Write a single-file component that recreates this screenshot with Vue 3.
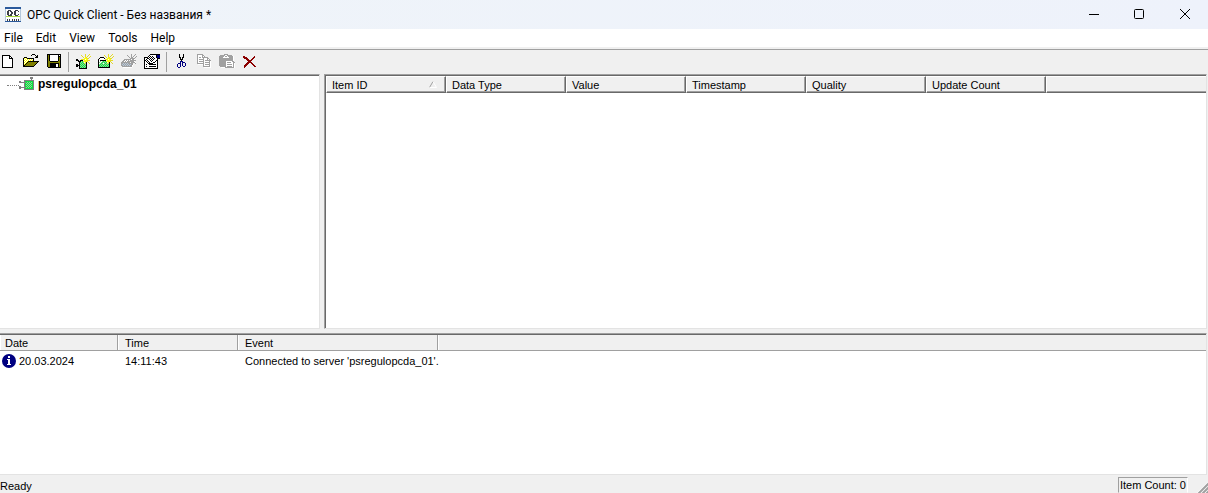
<script setup>
const palette = {
  k: '#000000',
  w: '#ffffff',
  y: '#ffff00',
  l: '#e4da28',
  o: '#808000',
  g: '#808080',
  s: '#b4c8dc',
  n: '#10e040',
  m: '#8bd898',
  b: '#000080',
  c: '#2b5a9c',
  d: '#3c4048',
  e: '#a8d840',
  r: '#8b0000',
  a: '#a0a0a0'
}

// Each icon is a small bitmap: one string per row, one palette letter per pixel.
const bitmaps = {
  new: [
    '................',
    '..kkkkkkkk......',
    '..kwwwwwwkk.....',
    '..kwwwwwwkwk....',
    '..kwwwwwwkkkk...',
    '..kwwwwwwwwwk...',
    '..kwwwwwwwwwk...',
    '..kwwwwwwwwwk...',
    '..kwwwwwwwwwk...',
    '..kwwwwwwwwwk...',
    '..kwwwwwwwwwk...',
    '..kwwwwwwwwwk...',
    '..kwwwwwwwwwk...',
    '..kkkkkkkkkkk...'
  ],
  open: [
    '.........kkk....',
    '........k...k.k.',
    '.............kk.',
    '.kkk........kkk.',
    'kywykkkkkkk.....',
    'kwywywywywk.....',
    'kywywywywyk.....',
    'kwywykkkkkkkkkkk',
    'kywykoooooooook.',
    'kwykoooooooook..',
    'kykoooooooook...',
    'kkoooooooook....',
    'kkkkkkkkkkk.....'
  ],
  save: [
    '.kkkkkkkkkkkkkk.',
    '.kokwwwwwwwwkwk.',
    '.kokwwwwwwwwkkk.',
    '.kokwwwwwwwwkok.',
    '.kokwwwwwwwwkok.',
    '.kokwwwwwwwwkok.',
    '.kokwwwwwwwwkok.',
    '.kookkkkkkkkook.',
    '.kooooooooooook.',
    '.kookkkkkkkkkok.',
    '.kookkkkkkwwkok.',
    '.kookkkkkkwwkok.',
    '.kookkkkkkwwkok.',
    '..kkkkkkkkkkkkk.'
  ],
  server: [
    '..........l...l.',
    '......l...l..l..',
    '.......l..l.l..l',
    '........l.yl..l.',
    '.........yyyll..',
    '.kk...lllywyy...',
    '.kkk.kkk.yyylll.',
    '...kkkmnlylyl...',
    '....knmnm.yk.l..',
    '....kmnmnlmk..l.',
    '.kk.knmnmnmk....',
    '.kkkkmnmnmnk....',
    '.kk.knmnmnmk....',
    '....kmnmnmnk....',
    '....kkkkkkkk....'
  ],
  group: [
    '..........l...l.',
    '......l...l..l..',
    '.......l..l.l..l',
    '..kkkk..l.yl..l.',
    '.kwwwwk..yyyll..',
    'kwwwwwwllywyy...',
    'kwkkkkkk.yyylll.',
    'kwmwmnmnlylyl...',
    'kmwmnmnmn.yk.l..',
    'kwmnmwmnmlmk..l.',
    'kmnmnmnmnmnk....',
    'knmnmnmnmnmk....',
    'kmnmnmnmnmnk....',
    'kkkkkkkkkkkk....'
  ],
  item: [
    '..........a...a.',
    '......a...a..a..',
    '.......a..a.a..a',
    '........a.aa..a.',
    '.........aaaaa..',
    '...aaaaaaawaaw..',
    '..aawawa.aaaaaa.',
    '.aawawaaaaaaaw..',
    'aaaaaaaaa.aaaaw.',
    'aasasasaaaaa..a.',
    'asasasasasaaw...',
    'aasasasasaaw....',
    '.aaaaaaaaaaw....',
    '..wwwwwwwww.....'
  ],
  properties: [
    '......kkkkkkkkkk',
    '.....kwwwwwwkbbb',
    '....kwkwkwwwkbbb',
    'kkkkwkwkwkwwkbbb',
    'kwwkkwkwkwkwwkkk',
    'kwkwwkwkwkwwwk..',
    'kkwkwwkwkwwwkk..',
    'kwkwkwwkwwwkwk..',
    'kwwkwkwwwkkwwk..',
    'kwwwkkkkkwwwwk..',
    'kwkwwkkkkkkkwk..',
    'kwwwwwwwwwwwwk..',
    'kwkwwkkkkkkkwk..',
    'kwwwwwwwwwwwwk..',
    'kkkkkkkkkkkkkk..'
  ],
  cut: [
    '......k...k.....',
    '......k...k.....',
    '......k...k.....',
    '......kk.kk.....',
    '.......k.k......',
    '.......kkk......',
    '........k.......',
    '.......bbb......',
    '.......b.bbb....',
    '.....bbb.b..b...',
    '....b..b.b..b...',
    '....b..b.b..b...',
    '....b..b..bb....',
    '.....bb.........'
  ],
  copy: [
    '.aaaaaa.........',
    '.awwwwaa........',
    '.awwwwawa.......',
    '.awaawaaaaaa....',
    '.awwwwwawwwaa...',
    '.awaaaaawwwawa..',
    '.awwwwwawaaaaaa.',
    '.awaaaaawwwwwaw.',
    '.awwwwwawaaaaaw.',
    '.aaaaaaawwwwwaw.',
    '..wwwwwawaaaaaw.',
    '.......awwwwwaw.',
    '.......aaaaaaaw.',
    '........wwwwwww.'
  ],
  paste: [
    '.....aaaa.......',
    '.aaaaawwaaaaa...',
    'aaaaawaawaaaaaw.',
    'aaaawwwwwwaaaaw.',
    'aaaaaaaaaaaaaaw.',
    'aaaaaaaaaaaaaaw.',
    'aaaaaaaaaaaaaaw.',
    'aaaaaaawwwwwwaa.',
    'aaaaaaawaaaawwaa',
    'aaaaaaawwwwwwwaw',
    'aaaaaaawaaaaawaw',
    'aaaaaaawwwwwwwaw',
    '.aaaaaawaaaaawaw',
    '..wwwwaaaaaaaaaw'
  ],
  remove: [
    '................',
    '................',
    '.rr.........r...',
    '.rrrr......rr...',
    '..rrrr....rr....',
    '....rrr..rr.....',
    '.....rrrrr......',
    '......rrr.......',
    '.....rrrrr......',
    '....rrr..rr.....',
    '...rrr....rr....',
    '..rrr......rr...',
    '..rr........rr..',
    '..r.............'
  ],
  node: [
    '...........ggg..',
    '...........ggg..',
    '............g...',
    '.....gggggggggg.',
    'gg...gnnnnnnnng.',
    'gggggggnmnmnmng.',
    '.....gnmnmnmnng.',
    '.....gnnmnmnmng.',
    '.....gnmnmnmnng.',
    'gg...gnnmnmnmng.',
    'gggggggmnmnmnng.',
    'gg...gnnnnnnnng.',
    '.....gggggggggg.'
  ],
  app: [
    'cccccccccccccccc',
    'cccccccccccccccc',
    'swwwwwwwwwwwwwws',
    'swwdddwwwwdddwws',
    'swddwddwwddwwdws',
    'swddwwddwddwwwws',
    'swddwwddwddwwwws',
    'swddwddwwddwwdws',
    'swwddddwwwdddwws',
    'seeeeeeeeeeeeees',
    'swwwwwwwwwwwwwws',
    'swwwwwwwwwwwwwws',
    'swdwdwwdwdwdwdws',
    'swdwdwwdwdwdwdws',
    'cccccccccccccccc'
  ]
}

const layers = {}
for (const [name, rows] of Object.entries(bitmaps)) {
  const paths = {}
  rows.forEach((row, y) => {
    let x = 0
    while (x < row.length) {
      const c = row[x]
      let end = x + 1
      while (row[end] === c) end++
      if (c !== '.') paths[c] = (paths[c] || '') + `M${x} ${y}h${end - x}v1h-${end - x}z`
      x = end
    }
  })
  layers[name] = Object.entries(paths).map(([c, d]) => ({ fill: palette[c], d }))
}

const menus = ['File', 'Edit', 'View', 'Tools', 'Help']
const toolGroups = [
  [['new', 'New'], ['open', 'Open'], ['save', 'Save']],
  [['server', 'New Server'], ['group', 'New Group'], ['item', 'New Item', true], ['properties', 'Properties']],
  [['cut', 'Cut'], ['copy', 'Copy', true], ['paste', 'Paste', true], ['remove', 'Delete']]
]
const itemColumns = ['Item ID', 'Data Type', 'Value', 'Timestamp', 'Quality', 'Update Count']
const events = [{ date: '20.03.2024', time: '14:11:43', text: "Connected to server 'psregulopcda_01'." }]
</script>

<template>
  <div class="window">
    <header class="titlebar">
      <svg class="icon" viewBox="0 0 16 16" aria-hidden="true">
        <path v-for="p in layers.app" :key="p.fill" :fill="p.fill" :d="p.d" />
      </svg>
      <h1>OPC Quick Client - Без названия *</h1>
      <div class="controls">
        <button type="button" aria-label="Minimize">
          <svg viewBox="0 0 12 12"><path d="M2 5.5h10" /></svg>
        </button>
        <button type="button" aria-label="Maximize">
          <svg viewBox="0 0 12 12"><rect x="1.5" y="0.5" width="9" height="9" rx="1" /></svg>
        </button>
        <button type="button" aria-label="Close">
          <svg viewBox="0 0 12 12"><path d="M1 0l10 10M11 0L1 10" /></svg>
        </button>
      </div>
    </header>

    <nav class="menubar">
      <button v-for="m in menus" :key="m" type="button">{{ m }}</button>
    </nav>

    <div class="toolbar" role="toolbar">
      <div v-for="(group, i) in toolGroups" :key="i" class="group">
        <button v-for="[icon, label, off] in group" :key="icon" type="button" :aria-label="label" :disabled="off">
          <svg class="icon" viewBox="0 0 16 16">
            <path v-for="p in layers[icon]" :key="p.fill" :fill="p.fill" :d="p.d" />
          </svg>
        </button>
      </div>
    </div>

    <main class="panes">
      <section class="tree">
        <ul>
          <li>
            <span class="branch"></span>
            <svg class="icon" viewBox="0 0 16 16" aria-hidden="true">
              <path v-for="p in layers.node" :key="p.fill" :fill="p.fill" :d="p.d" />
            </svg>
            <b>psregulopcda_01</b>
          </li>
        </ul>
      </section>
      <section class="items">
        <table>
          <colgroup>
            <col v-for="c in itemColumns" :key="c" class="item-col" />
            <col />
          </colgroup>
          <thead>
            <tr>
              <th v-for="(c, i) in itemColumns" :key="c">
                <div class="cell">
                  {{ c }}
                  <svg v-if="i === 0" class="sort" viewBox="0 0 8 7" aria-hidden="true">
                    <path d="M0.5 6.5L4 0.5" stroke="#a0a0a0" />
                    <path d="M4 0.5L7.5 6.5H0.5" stroke="#ffffff" />
                  </svg>
                </div>
              </th>
              <th><div class="cell"></div></th>
            </tr>
          </thead>
        </table>
      </section>
    </main>

    <section class="log">
      <table>
        <colgroup>
          <col class="date-col" />
          <col class="time-col" />
          <col class="event-col" />
          <col />
        </colgroup>
        <thead>
          <tr><th>Date</th><th>Time</th><th>Event</th><th></th></tr>
        </thead>
        <tbody>
          <tr v-for="e in events" :key="e.time">
            <td>
              <div class="date">
                <svg class="info" viewBox="0 0 14 14" aria-hidden="true">
                  <circle cx="7" cy="7" r="7" fill="#000080" />
                  <path d="M6 2h2v2H6zM5 5h3v5h1v1H5v-1h1V6H5z" fill="#ffffff" />
                </svg>
                {{ e.date }}
              </div>
            </td>
            <td>{{ e.time }}</td>
            <td>{{ e.text }}</td>
            <td></td>
          </tr>
        </tbody>
      </table>
    </section>

    <footer class="status">
      <span class="ready">Ready</span>
      <span class="count">Item Count: 0</span>
      <svg class="grip" viewBox="0 0 12 12" aria-hidden="true">
        <path d="M1 13L13 1M5 13L13 5M9 13L13 9" stroke="#ffffff" stroke-width="2" />
        <path d="M2 13L13 2M6 13L13 6M10 13L13 10" stroke="#a0a0a0" stroke-width="2" />
      </svg>
    </footer>
  </div>
</template>

<style>
body {
  margin: 0;
}
</style>

<style scoped>
.window {
  display: grid;
  grid-template-rows: 29px 20px 25px minmax(0, 1fr) 142px 18px;
  height: 100vh;
  overflow: hidden;
  background: #f0f0f0;
  color: #000;
  font: 11px/14px "Liberation Sans", Arial, sans-serif;
}

button {
  margin: 0;
  padding: 0;
  border: 0;
  background: none;
  color: inherit;
  font: inherit;
}

.icon {
  flex: none;
  width: 16px;
  height: 16px;
  shape-rendering: crispEdges;
}

.titlebar {
  display: flex;
  align-items: center;
  padding-left: 5px;
  background: linear-gradient(90deg, #eff4f9, #eef2fb);
}

h1 {
  flex: 1;
  margin: 0 0 0 6px;
  font: 12px/16px Roboto, "Noto Sans", sans-serif;
}

.controls {
  display: flex;
}

.controls button {
  display: flex;
  align-items: center;
  justify-content: center;
  width: 46px;
  height: 28px;
}

.controls svg {
  width: 12px;
  height: 12px;
  fill: none;
  stroke: #000;
}

.menubar {
  display: flex;
  box-sizing: border-box;
  padding-left: 4px;
  gap: 13px;
  border-bottom: 2px solid #f0f0f0;
  background: #fff;
  font: 12px/18px Roboto, "Noto Sans", sans-serif;
}

.toolbar {
  display: flex;
  box-sizing: border-box;
  margin-left: -4px;
  border-top: 1px solid #a0a0a0;
}

.group {
  display: flex;
}

.group + .group {
  margin: 2px 0 2px 3px;
  padding-left: 2px;
  border-left: 1px solid #a0a0a0;
}

.group button {
  display: flex;
  padding: 4px 3px 0 4px;
}

.group + .group button {
  padding-top: 2px;
}

.panes {
  display: grid;
  grid-template-columns: 320px minmax(0, 1fr);
  gap: 4px;
  padding: 0 1px 4px 0;
}

.tree,
.items,
.log {
  border-top: 1px solid #a0a0a0;
  border-right: 1px solid #e3e3e3;
  border-bottom: 1px solid #e3e3e3;
  background: #fff;
  box-shadow: inset 0 1px #696969;
}

.items {
  border-left: 1px solid #a0a0a0;
  padding: 1px 0 0 1px;
  box-shadow: inset 1px 1px #696969;
}

ul {
  margin: 0;
  padding: 2px 0 0 7px;
  list-style: none;
}

li {
  display: flex;
  align-items: center;
  height: 16px;
}

.branch {
  width: 12px;
  border-top: 1px dotted #808080;
}

li b {
  align-self: flex-start;
  margin-left: 3px;
  font: bold 12px/14px "Liberation Sans", Arial, sans-serif;
}

table {
  width: 100%;
  table-layout: fixed;
  border-spacing: 0;
}

th,
td {
  padding: 0;
  text-align: left;
  font-weight: normal;
  white-space: nowrap;
}

.item-col {
  width: 120px;
}

.cell {
  display: flex;
  align-items: center;
  justify-content: space-between;
  box-sizing: border-box;
  height: 17px;
  padding: 0 8px 0 5px;
  border: 1px solid;
  border-color: #fff #696969 #696969 #fff;
  background: #f0f0f0;
  box-shadow: inset -1px -1px #a0a0a0;
}

th:last-child .cell {
  border-right: 0;
  box-shadow: inset 0 -1px #a0a0a0;
}

.sort {
  width: 8px;
  height: 7px;
  fill: none;
}

.log {
  margin-right: 1px;
  padding-top: 1px;
}

.date-col {
  width: 118px;
}

.time-col {
  width: 120px;
}

.event-col {
  width: 200px;
}

.log th {
  height: 15px;
  padding-left: 5px;
  border-right: 1px solid #a0a0a0;
  border-bottom: 1px solid #a0a0a0;
  background: #f0f0f0;
  box-shadow: inset 1px 0 #fff;
}

.log th + th,
.log td + td {
  padding-left: 7px;
}

.log th:last-child {
  border-right: 0;
}

.log td {
  height: 19px;
}

.date {
  display: flex;
  align-items: center;
  gap: 3px;
  padding-left: 2px;
}

.info {
  width: 14px;
  height: 14px;
}

.status {
  display: flex;
  align-items: flex-end;
}

.ready {
  flex: 1;
}

.count {
  margin-right: 8px;
  padding: 0 1px;
  border: 1px solid;
  border-color: #a0a0a0 #fff transparent #a0a0a0;
}

.grip {
  width: 12px;
  height: 12px;
}
</style>
